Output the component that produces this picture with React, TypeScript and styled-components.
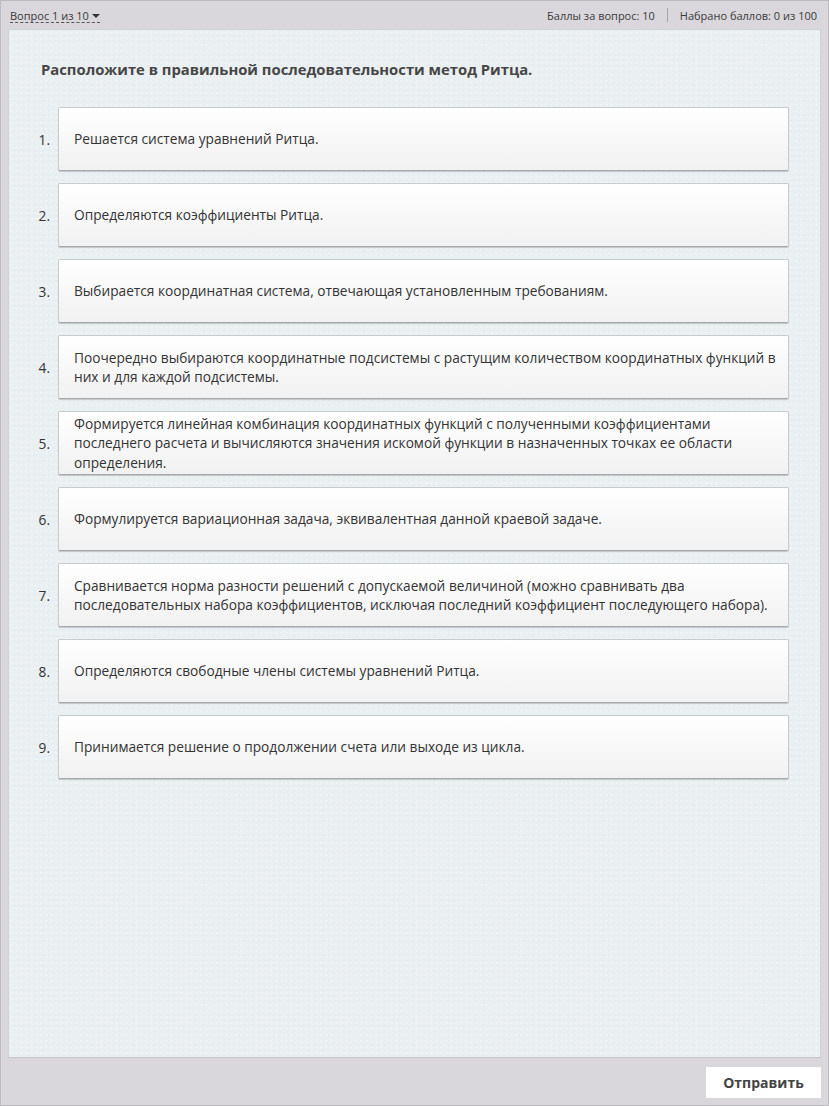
import React from "react";
import styled, { createGlobalStyle } from "styled-components";

const Global = createGlobalStyle`
  html, body { margin: 0; padding: 0; }
  body {
    font-family: "Open Sans", "Noto Sans", sans-serif;
    background: #d9d7db;
  }
`;

const Frame = styled.div`
  box-sizing: border-box;
  width: 829px;
  height: 1106px;
  border: 1px solid #bdbbc0;
  background: #d9d7db;
  display: flex;
  flex-direction: column;
`;

const TopBar = styled.div`
  height: 28px;
  display: flex;
  align-items: center;
  justify-content: space-between;
  padding: 0 11px 0 9px;
  font-size: 11px;
  color: #3a3a3a;
`;

const QuestionPicker = styled.span`
  border-bottom: 1px dashed #555;
  line-height: 13px;
  display: inline-flex;
  align-items: center;
  gap: 3px;
  margin-top: 2px;
`;

const Caret = styled.span`
  width: 0;
  height: 0;
  border-left: 4px solid transparent;
  border-right: 4px solid transparent;
  border-top: 4px solid #333;
`;

const Stats = styled.div`
  display: flex;
  align-items: center;
  gap: 12px;
`;

const Divider = styled.span`
  width: 1px;
  height: 14px;
  background: #a9a7ad;
`;

const Panel = styled.div`
  margin: 0 7px 0 7px;
  height: 1029px;
  box-sizing: border-box;
  background-color: #eaeff1;
  background-image: radial-gradient(rgba(255, 255, 255, 0.22) 1px, transparent 1.5px),
    radial-gradient(rgba(205, 214, 218, 0.12) 1px, transparent 1.5px);
  background-size: 5px 6px, 7px 5px;
  background-position: 0 0, 2px 3px;
  border: 1px solid #cfd3d6;
  border-bottom-color: #c4c4c8;
  padding: 29px 31px 0 24px;
`;

const Title = styled.h1`
  margin: 0 0 28px 8px;
  font-size: 14.8px;
  font-weight: 700;
  color: #464646;
  line-height: 20px;
`;

const List = styled.ol`
  list-style: none;
  margin: 0;
  padding: 0;
  display: flex;
  flex-direction: column;
  gap: 12px;
`;

const Row = styled.li`
  display: flex;
  align-items: center;
`;

const Num = styled.span`
  width: 17px;
  text-align: right;
  font-size: 13.7px;
  color: #333;
  margin-right: 8px;
  flex-shrink: 0;
`;

const Card = styled.div`
  box-sizing: border-box;
  flex: 1;
  height: 64px;
  display: flex;
  align-items: center;
  padding: 0 6px 0 15px;
  background: linear-gradient(#ffffff, #f1f1f1);
  border: 1px solid #c9cccd;
  border-bottom: 1px solid #a9aaab;
  border-radius: 2px;
  box-shadow: 0 1px 1px rgba(0, 0, 0, 0.18);
  font-size: 13.7px;
  line-height: 19.5px;
  color: #333;
`;

const Footer = styled.div`
  flex: 1;
  display: flex;
  justify-content: flex-end;
  align-items: center;
  padding-right: 7px;
`;

const SubmitButton = styled.button`
  width: 115px;
  height: 31px;
  border: none;
  background: #fff;
  font-family: inherit;
  font-size: 14px;
  font-weight: 700;
  color: #444;
  border-radius: 1px;
  margin-top: 1px;
`;

const items = [
  "Решается система уравнений Ритца.",
  "Определяются коэффициенты Ритца.",
  "Выбирается координатная система, отвечающая установленным требованиям.",
  "Поочередно выбираются координатные подсистемы с растущим количеством координатных функций в них и для каждой подсистемы.",
  "Формируется линейная комбинация координатных функций с полученными коэффициентами последнего расчета и вычисляются значения искомой функции в назначенных точках ее области определения.",
  "Формулируется вариационная задача, эквивалентная данной краевой задаче.",
  "Сравнивается норма разности решений с допускаемой величиной (можно сравнивать два последовательных набора коэффициентов, исключая последний коэффициент последующего набора).",
  "Определяются свободные члены системы уравнений Ритца.",
  "Принимается решение о продолжении счета или выходе из цикла.",
];

export default function App() {
  return (
    <>
      <Global />
      <Frame>
        <TopBar>
          <QuestionPicker>
            Вопрос 1 из 10 <Caret />
          </QuestionPicker>
          <Stats>
            <span>Баллы за вопрос: 10</span>
            <Divider />
            <span>Набрано баллов: 0 из 100</span>
          </Stats>
        </TopBar>
        <Panel>
          <Title>Расположите в правильной последовательности метод Ритца.</Title>
          <List>
            {items.map((t, i) => (
              <Row key={i}>
                <Num>{i + 1}.</Num>
                <Card>{t}</Card>
              </Row>
            ))}
          </List>
        </Panel>
        <Footer>
          <SubmitButton>Отправить</SubmitButton>
        </Footer>
      </Frame>
    </>
  );
}
